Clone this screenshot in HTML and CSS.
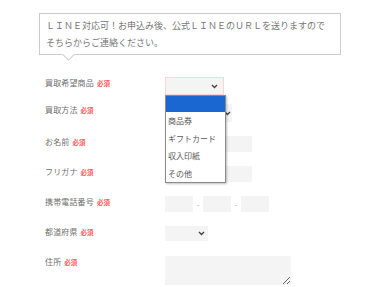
FILE: index.html
```html
<!DOCTYPE html>
<html lang="ja">
<head>
<meta charset="UTF-8">
<title>買取お申込み</title>
<link rel="stylesheet" href="styles.css">
</head>
<body>

<div class="wrap">
  <div class="balloon">
    ＬＩＮＥ対応可！お申込み後、公式ＬＩＮＥのＵＲＬを送りますので<br>そちらからご連絡ください。
  </div>

  <form class="form">

    <div class="row row-first">
      <label class="label">買取希望商品<span class="req">必須</span></label>
      <div class="select select-item is-open">
        <svg class="chev" width="7" height="5" viewBox="0 0 7 5"><path d="M1 1l2.5 2.5L6 1" fill="none" stroke="#444" stroke-width="1.4"/></svg>
        <ul class="dropdown">
          <li class="opt selected"></li>
          <li class="opt">商品券</li>
          <li class="opt">ギフトカード</li>
          <li class="opt">収入印紙</li>
          <li class="opt">その他</li>
        </ul>
      </div>
    </div>

    <div class="row row-second">
      <label class="label">買取方法<span class="req">必須</span></label>
      <div class="select select-method">
        <svg class="chev" width="7" height="5" viewBox="0 0 7 5"><path d="M1 1l2.5 2.5L6 1" fill="none" stroke="#444" stroke-width="1.4"/></svg>
      </div>
    </div>

    <div class="row">
      <label class="label">お名前<span class="req">必須</span></label>
      <input type="text" class="input input-name">
    </div>

    <div class="row">
      <label class="label">フリガナ<span class="req">必須</span></label>
      <input type="text" class="input input-name">
    </div>

    <div class="row">
      <label class="label">携帯電話番号<span class="req">必須</span></label>
      <div class="tel">
        <input type="text" class="input input-tel">
        <span class="dash">-</span>
        <input type="text" class="input input-tel">
        <span class="dash">-</span>
        <input type="text" class="input input-tel">
      </div>
    </div>

    <div class="row">
      <label class="label">都道府県<span class="req">必須</span></label>
      <div class="select select-pref">
        <svg class="chev" width="7" height="5" viewBox="0 0 7 5"><path d="M1 1l2.5 2.5L6 1" fill="none" stroke="#444" stroke-width="1.4"/></svg>
      </div>
    </div>

    <div class="row">
      <label class="label">住所<span class="req">必須</span></label>
      <textarea class="input textarea"></textarea>
    </div>

  </form>
</div>

</body>
</html>
```

FILE: styles.css
```css
body {
  margin: 0;
  padding: 0;
  background: #fff;
  font-family: "Noto Sans CJK JP", "Noto Sans", sans-serif;
  color: #666;
  overflow: hidden;
}

.wrap {
  padding: 13px 0 0 39px;
}

/* 吹き出し */
.balloon {
  position: relative;
  box-sizing: border-box;
  width: 302px;
  padding: 3px 6px;
  border: 1px solid #ccc;
  background: #fff;
  font-size: 9px;
  line-height: 17px;
  color: #777;
}

.balloon::after {
  content: "";
  position: absolute;
  left: 24px;
  top: 36px;
  width: 8px;
  height: 8px;
  background: #fff;
  border-right: 1px solid #ccc;
  border-bottom: 1px solid #ccc;
  transform: rotate(45deg);
}

.form {
  margin-top: 22px;
  padding-left: 6px;
}

.row {
  display: flex;
  align-items: flex-start;
  height: 30px;
}

.row-first {
  height: 27px;
}

.row-second {
  height: 32px;
}

.label {
  width: 120px;
  flex-shrink: 0;
  font-size: 8px;
  line-height: 12px;
  letter-spacing: 0.15px;
  color: #707070;
}

.req {
  margin-left: 3px;
  font-size: 6.5px;
  font-weight: bold;
  letter-spacing: 0;
  color: #ff5b5b;
}

.input {
  display: block;
  box-sizing: border-box;
  height: 16px;
  margin: 0;
  padding: 0 4px;
  border: none;
  background: #f4f4f4;
  outline: none;
}

.input-name {
  width: 87px;
}

.tel {
  display: flex;
  align-items: center;
}

.input-tel {
  width: 28px;
}

.dash {
  width: 10px;
  text-align: center;
  font-size: 7px;
  color: #999;
}

.textarea {
  width: 126px;
  height: 29px;
  resize: vertical;
}

/* セレクト */
.select {
  position: relative;
  box-sizing: border-box;
  height: 18px;
  background: #f4f4f4;
}

.chev {
  position: absolute;
  top: 7px;
}

.select-item {
  width: 59px;
  border: 1px solid #f7d6da;
  z-index: 2;
}

.select-item .chev {
  right: 5px;
  top: 6px;
}

.select-method {
  width: 67px;
}

.select-method .chev {
  right: 1px;
}

.select-pref {
  width: 43px;
  height: 15px;
}

.select-pref .chev {
  right: 3px;
  top: 5px;
}

.dropdown {
  position: absolute;
  left: -1px;
  top: 17px;
  width: 59px;
  margin: 0;
  padding: 0;
  list-style: none;
  background: #fff;
  border: 1px solid #8a8a8a;
  box-shadow: 1px 1px 2px rgba(0, 0, 0, 0.25);
}

.opt {
  height: 17.5px;
  padding-left: 2px;
  font-size: 8px;
  line-height: 17.5px;
  color: #555;
}

.opt.selected {
  height: 16px;
  background: #1a67d2;
}
```
